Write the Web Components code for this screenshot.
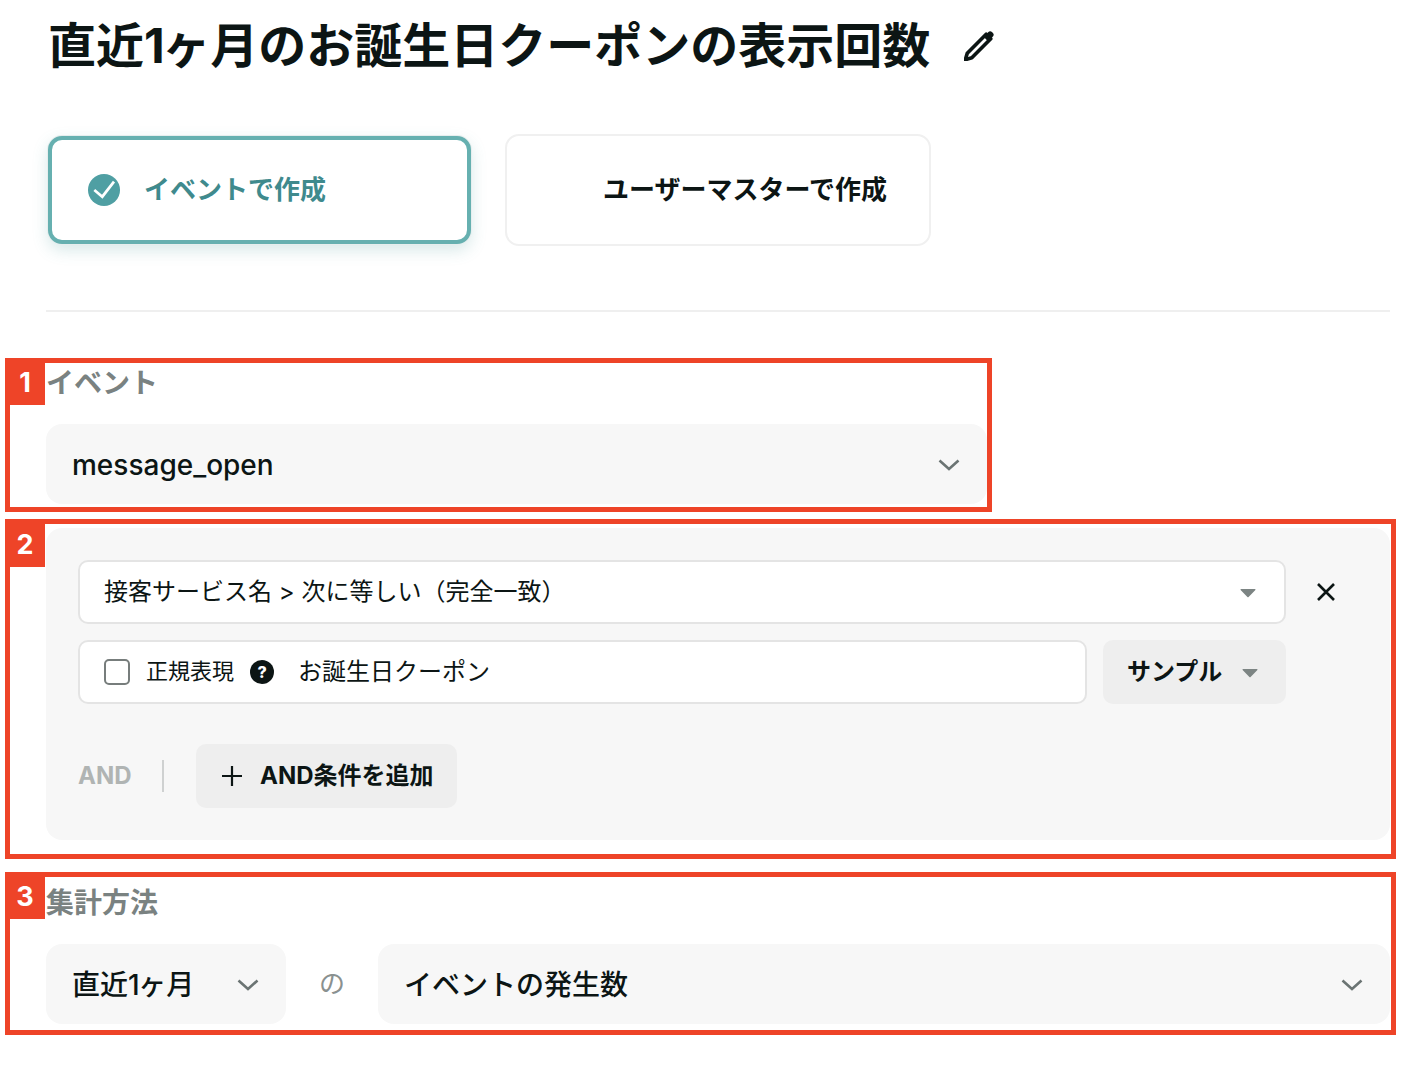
<!DOCTYPE html>
<html lang="ja">
<head>
<meta charset="utf-8">
<title>お誕生日クーポン</title>
<style>
  html, body { margin: 0; background: #fff; }
  body { font-family: Inter, "Noto Sans CJK JP", sans-serif; color: #0c1514; }
  main { display: block; padding: 14px 38px 50px 46px; }
  .mode-row { display: flex; align-items: center; gap: 34px; margin: 56px 0 0 2px; }
  hr { border: 0; height: 2px; background: #efefef; margin: 64px 0 50px; }
  #sec2 { margin-top: 24px; }
  #sec3 { margin-top: 43px; }
  .small-ke { margin-left: -0.05em; }
</style>
</head>
<body>
<main>
  <report-title>直近1<span class="small-ke">ヶ</span>月のお誕生日クーポンの表示回数</report-title>
  <div class="mode-row">
    <mode-card selected>イベントで作成</mode-card>
    <mode-card>ユーザーマスターで作成</mode-card>
  </div>
  <hr>
  <marked-section n="1" narrow style="--top:-4px;--bottom:-8px;--right:-5px">
    <field-label>イベント</field-label>
    <big-select>message_open</big-select>
  </marked-section>
  <marked-section id="sec2" n="2" style="--top:-9px;--bottom:-19px;--badge-h:48px">
    <condition-panel>
      <caret-select>接客サービス名 &gt; 次に等しい（完全一致）</caret-select>
      <regex-input>お誕生日クーポン</regex-input>
      <sample-button>サンプル</sample-button>
      <add-condition>AND条件を追加</add-condition>
    </condition-panel>
  </marked-section>
  <marked-section id="sec3" n="3" style="--top:-11px;--bottom:-11px;--label-gap:21px;--label-pad:0">
    <field-label>集計方法</field-label>
    <aggregate-row>
      <big-select slot="period">直近1<span class="small-ke">ヶ</span>月</big-select>
      <big-select slot="metric">イベントの発生数</big-select>
    </aggregate-row>
  </marked-section>
</main>

<script>
(function() {

  const CHEVRON = `<svg width="22" height="12" viewBox="0 0 22 12"><path d="M1.5 1.5 11 10l9.5-8.5" fill="none" stroke="#6b7473" stroke-width="2.6"/></svg>`;
  const CARET = `<svg width="16" height="10" viewBox="0 0 16 10"><path d="M1 1h14a.6.6 0 0 1 .4 1L8.6 9a.8.8 0 0 1-1.2 0L.6 2A.6.6 0 0 1 1 1z" fill="#7c8483"/></svg>`;

  function define(name, html, init) {
    const template = document.createElement('template');
    template.innerHTML = html;
    customElements.define(name, class extends HTMLElement {
      constructor() {
        super();
        this.attachShadow({ mode: 'open' });
        this.shadowRoot.appendChild(template.content.cloneNode(true));
      }
      connectedCallback() {
        if (init) init(this);
      }
    });
  }

  define('report-title', `
    <style>
      :host { display: flex; align-items: center; gap: 34px; padding-left: 2px; height: 64px; }
      h1 { margin: 0; font: 700 48px/64px Inter, "Noto Sans CJK JP", sans-serif; white-space: nowrap; }
      svg { display: block; }
    </style>
    <h1><slot></slot></h1>
    <svg width="30" height="30" viewBox="3.5 3.5 23 23">
      <path d="M6 20.5 20.5 6l3.5 3.500L9.500 24 4.500 25.500z" fill="#fff" stroke="#0c1514" stroke-width="2.800" stroke-linejoin="round"/>
      <path d="M18.500 8 22 4.500a2.200 2.200 0 0 1 3.100 0l.4.4a2.200 2.200 0 0 1 0 3.100L22 11.500z" fill="#0c1514"/>
    </svg>`);

  define('mode-card', `
    <style>
      :host { display: flex; align-items: center; gap: 25px; box-sizing: border-box; width: 426px; height: 112px;
        padding-left: 38px; border: 2px solid #f0f0f0; border-radius: 14px; background: #fff;
        font: 700 26px/36px Inter, "Noto Sans CJK JP", sans-serif; color: #0c1514; }
      :host([selected]) { width: 423px; height: 108px; padding-left: 36px; gap: 23px; border: 4px solid #66b0b0;
        color: #3f8a8d; box-shadow: 0 0 0 1px #e6eeee, 0 6px 16px rgba(70, 150, 150, .22); }
      .icon { width: 33px; height: 33px; flex: none; }
      :host([selected]) svg { display: block; }
      svg { display: none; }
    </style>
    <span class="icon">
      <svg width="33" height="33" viewBox="0 0 33 33">
        <circle cx="16" cy="16" r="16" fill="#4f9fa3"/>
        <path d="M6.300 16l8 6.700L26 7.700" fill="none" stroke="#fff" stroke-width="2.700"/>
      </svg>
    </span>
    <span><slot></slot></span>`);

  define('marked-section', `
    <style>
      :host { display: block; position: relative; }
      :host([narrow]) { width: 941px; }
      .frame { position: absolute; top: var(--top); bottom: var(--bottom); left: -41px; right: var(--right, -6px);
        border: 5px solid #ee4428; pointer-events: none; }
      .badge { position: absolute; top: -5px; left: -5px; width: 40px; height: var(--badge-h, 47px); display: flex;
        align-items: center; justify-content: center; padding-top: 2px; box-sizing: border-box; background: #ee4428; color: #fff;
        font: 700 27px/1 Inter, "Liberation Sans", sans-serif; }
    </style>
    <slot></slot>
    <div class="frame"><div class="badge"></div></div>`,
    el => { el.shadowRoot.querySelector('.badge').textContent = el.getAttribute('n'); });

  define('field-label', `
    <style>
      :host { display: block; box-sizing: border-box; height: 40px; padding-top: var(--label-pad, 1px); margin-bottom: var(--label-gap, 22px);
        font: 700 28px/40px Inter, "Noto Sans CJK JP", sans-serif; color: #7a8281; }
    </style>
    <slot></slot>`);

  define('big-select', `
    <style>
      :host { display: flex; align-items: center; justify-content: space-between; box-sizing: border-box; height: 80px;
        padding: 0 27px 0 26px; border-radius: 16px; background: #f7f7f7;
        font: 500 28px/40px Inter, "Noto Sans CJK JP", sans-serif; color: #0c1514; }
      span { padding-top: 2px; }
      svg { display: block; flex: none; margin-top: 2px; }
    </style>
    <span><slot></slot></span>${CHEVRON}`);

  define('caret-select', `
    <style>
      :host { display: flex; align-items: center; justify-content: space-between; box-sizing: border-box; height: 64px;
        padding: 0 28px 0 24px; border: 2px solid #e4e4e4; border-radius: 10px; background: #fff;
        font: 400 24px/32px Inter, "Noto Sans CJK JP", sans-serif; color: #0c1514; }
      svg { display: block; margin-top: 2px; }
    </style>
    <span><slot></slot></span>${CARET}`);

  define('regex-input', `
    <style>
      :host { display: flex; align-items: center; box-sizing: border-box; height: 64px; padding-left: 24px;
        border: 2px solid #e4e4e4; border-radius: 10px; background: #fff;
        font: 400 24px/32px Inter, "Noto Sans CJK JP", sans-serif; color: #0c1514; }
      .box { box-sizing: border-box; width: 26px; height: 26px; border: 2px solid #777d7c; border-radius: 5px; background: #fff; }
      .name { margin: -2px 0 0 16px; font-size: 22px; }
      .help { display: flex; align-items: center; justify-content: center; width: 24px; height: 24px; margin: 0 24px 0 16px;
        border-radius: 50%; background: #0c1514; color: #fff; font: 800 16px/1 Inter, sans-serif; }
    </style>
    <span class="box"></span>
    <span class="name">正規表現</span>
    <span class="help">?</span>
    <span><slot></slot></span>`);

  define('sample-button', `
    <style>
      :host { display: flex; align-items: center; justify-content: space-between; box-sizing: border-box; height: 64px;
        padding: 0 28px 0 24px; border-radius: 10px; background: #eeeeee;
        font: 700 24px/32px Inter, "Noto Sans CJK JP", sans-serif; color: #0c1514; }
      svg { display: block; margin-top: 2px; }
    </style>
    <span><slot></slot></span>${CARET}`);

  define('add-condition', `
    <style>
      :host { display: flex; align-items: center; font: 700 24px/32px Inter, "Noto Sans CJK JP", sans-serif; color: #0c1514; }
      .and { color: #b0b4b3; width: 84px; box-sizing: border-box; }
      .sep { width: 2px; height: 32px; background: #cfd1d1; margin-right: 32px; }
      .btn { display: flex; align-items: center; gap: 18px; box-sizing: border-box; height: 64px; padding: 0 23px 0 26px;
        border-radius: 10px; background: #eeeeee; }
      svg { display: block; }
    </style>
    <span class="and">AND</span>
    <span class="sep"></span>
    <span class="btn">
      <svg width="20" height="20" viewBox="0 0 20 20"><path d="M10 0v20M0 10h20" stroke="#0c1514" stroke-width="2.200"/></svg>
      <span><slot></slot></span>
    </span>`);

  define('condition-panel', `
    <style>
      :host { display: grid; grid-template-columns: 1fr 104px; row-gap: 16px; padding: 32px 0 32px 32px;
        border-radius: 16px; background: #f7f7f7; }
      .close { display: flex; align-items: center; justify-content: center; width: 80px; }
      .second { display: grid; grid-template-columns: 1fr 183px; gap: 16px; }
      .third { margin-top: 24px; }
      svg { display: block; }
    </style>
    <div class="first"><slot></slot></div>
    <div class="close">
      <svg width="20" height="20" viewBox="0 0 20 20"><path d="M2 2l16 16M18 2 2 18" stroke="#0c1514" stroke-width="2.600"/></svg>
    </div>
    <div class="second"><slot name="input"></slot><slot name="sample"></slot></div>
    <div></div>
    <div class="third"><slot name="add"></slot></div>`,
    el => {
      el.querySelector('regex-input').slot = 'input';
      el.querySelector('sample-button').slot = 'sample';
      el.querySelector('add-condition').slot = 'add';
    });

  define('aggregate-row', `
    <style>
      :host { display: grid; grid-template-columns: 240px 92px 1fr; align-items: center; }
      .of { text-align: center; font: 400 26px/40px Inter, "Noto Sans CJK JP", sans-serif; color: #8a9190; }
    </style>
    <slot name="period"></slot>
    <span class="of">の</span>
    <slot name="metric"></slot>`);

})();
</script>
</body>
</html>
